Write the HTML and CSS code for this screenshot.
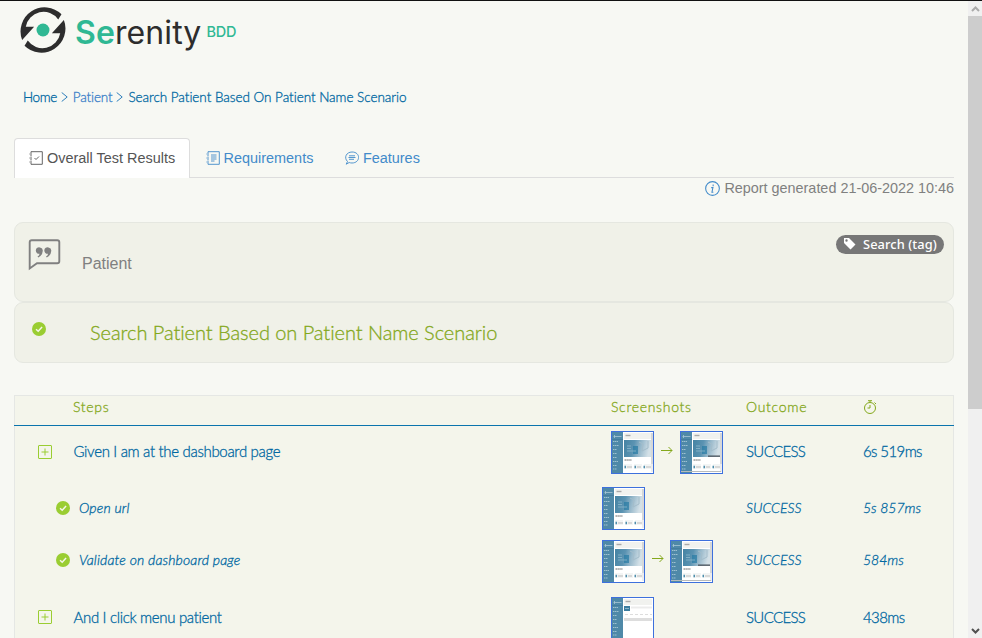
FILE: index.html
```
<!DOCTYPE html>
<html lang="en">
<head>
<meta charset="utf-8">
<title>Serenity Reports</title>
<link rel="stylesheet" href="styles.css">
</head>
<body>
<svg class="defs" aria-hidden="true">
  <defs>
    <linearGradient id="hero" x1="0" y1="0" x2="1" y2="0.15">
      <stop offset="0" stop-color="#4583a3"/><stop offset=".4" stop-color="#5b93b2"/><stop offset=".65" stop-color="#95b7ca"/><stop offset="1" stop-color="#d3e0e7"/>
    </linearGradient>
  </defs>
  <symbol id="check" viewBox="0 0 16 16"><circle cx="8" cy="8" r="8" fill="#9acd32"/><path d="M4.600 8.200l2.500 2.400 4.400-4.900" fill="none" stroke="#f4f5e9" stroke-width="1.700"/></symbol>
  <symbol id="plus" viewBox="0 0 14 14"><rect x=".5" y=".5" width="13" height="13" rx=".5"/><path d="M3.500 7h7M7 3.500v7"/></symbol>
  <symbol id="arrow" viewBox="0 0 12 10"><path d="M0 5.500h11M7.500 2l3.500 3.500L7.500 9"/></symbol>
  <symbol id="thumb-side" viewBox="0 0 41 41">
    <rect width="41" height="41" fill="#fff"/><rect width="11" height="41" fill="#4f89a8"/>
    <path d="M1.500 4.500h8M2.500 3v3" stroke="#a9c7d6" stroke-width=".8"/>
    <path d="M0 7.500h11" stroke="#40799a" stroke-width=".7"/>
    <path d="M1 9.500h5M1 13.500h5.500M1 17.500h4M1 21.500h4M1 25.500h4M1 29.500h5M1 33.500h4M1 37h4" stroke="#9fc0d0" stroke-width="1" stroke-dasharray="1.500 .5"/>
    <rect x="12" y="1" width="28" height="6" fill="#f1f2ef"/><path d="M13.500 3.500h5" stroke="#aaa" stroke-width="1.400"/>
  </symbol>
  <symbol id="thumb-dash" viewBox="0 0 41 41">
    <use href="#thumb-side"/>
    <rect x="12" y="8" width="27" height="17" fill="url(#hero)"/>
    <path d="M21 14h5v8h-5z" fill="#277ba4" opacity=".7"/><path d="M15 14h4M15 16.500h4M15 19h9" stroke="#8db7cc" stroke-width=".8"/>
    <path d="M27 10l4 2-1 7 6-3V9" fill="none" stroke="#a4bdcb" stroke-width="1"/>
    <path d="M12.500 28h7" stroke="#666" stroke-width="1" stroke-dasharray="1.500 .4"/>
    <path d="M12 32h8v5h-8zM22 32h8v5h-8zM32 32h8v5h-8z" fill="#f3f5f5"/>
    <path d="M12.500 35h1.500M22.500 35h1.500M31.500 35h1.500" stroke="#4d8dac" stroke-width="2.500"/>
    <path d="M15 35h5M25 35h4M34 35h5" stroke="#bbb" stroke-width="1"/>
    <path d="M40 1v39" stroke="#e7e7e7" stroke-width="1.400"/><path d="M40 1v31" stroke="#bfc2c2" stroke-width="1"/>
  </symbol>
  <symbol id="thumb-scroll" viewBox="0 0 41 41">
    <use href="#thumb-dash"/><path d="M27 23.500h12v1.300h-12z" fill="#47505a"/><path d="M0 39.500h40" stroke="#b8bbbc" stroke-width="1.200"/>
  </symbol>
  <symbol id="thumb-list" viewBox="0 0 41 41">
    <use href="#thumb-side"/><rect x="12" y="8" width="6" height="5" fill="#3c7d9f"/><path d="M13 10.500h4" stroke="#8db5ca" stroke-width="1"/>
    <path d="M19 9.500h21" stroke="#ececec" stroke-width="2"/><path d="M13 16.500h27" stroke="#ddd" stroke-width="1" stroke-dasharray="3 2"/><path d="M12 21.500h28" stroke="#ddd" stroke-width="3"/>
  </symbol>
</svg>

<div class="window">
  <main class="page">
    <header class="brand">
      <svg class="brand-mark" viewBox="1 1 46 46">
        <g id="blade"><path d="M4 33.500A23 23 0 0 1 41.700 9L38.600 14A17.200 17.200 0 0 0 7.500 21H15.500z"/></g>
        <use href="#blade" transform="rotate(180 24 24)"/>
        <circle cx="24" cy="24" r="6.200" class="brand-dot"/>
      </svg>
      <div class="brand-name"><b>Se</b>renity</div><span class="brand-suffix">BDD</span>
    </header>

    <nav class="crumbs">
      <a class="crumb-home">Home</a><svg class="chevron" viewBox="0 0 7 10"><path d="M.7 .5l5.500 4.500-5.500 4.500"/></svg>
      <a class="crumb-parent">Patient</a><svg class="chevron" viewBox="0 0 7 10"><path d="M.7 .5l5.500 4.500-5.500 4.500"/></svg>
      <a class="crumb-current">Search Patient Based On Patient Name Scenario</a>
    </nav>

    <ul class="tabs">
      <li class="tab active"><svg class="tab-icon" viewBox="0 0 14 14"><path d="M2 2V.7h11.300v12.600H2V12M2 4v1.500M2 8v1.500M.5 3h2.500M.5 7h2.500M.5 11h2.500M5.500 7l1.500 1.500 3-3"/></svg><span>Overall Test Results</span></li>
      <li class="tab"><svg class="tab-icon" viewBox="0 0 14 14"><path d="M2 2V.7h11.300v12.600H2V12M2 4v1.500M2 8v1.500M.5 3h2.500M.5 7h2.500M.5 11h2.500M5 4h5.500M5 6h5.500M5 8h5.500M5 10h3.500"/></svg><span>Requirements</span></li>
      <li class="tab"><svg class="tab-icon" viewBox="0 0 14 14"><path d="M2.500 10.500C-1.500 6.500 1.500 1 7 1c9 0 8.500 11 0 11-1.200 0-2-.2-2.800-.5L1.200 13.200zM4 4.800h6M3.500 6.500h7M4 8.300h5"/></svg><span>Features</span></li>
    </ul>
    <div class="generated"><svg class="info-icon" viewBox="0 0 14 14"><circle cx="7" cy="7" r="6.400"/><path d="M7.600 3.300v1.500M5.800 6.200h1.600l-.9 4.300h1.300"/></svg><span>Report generated 21-06-2022 10:46</span></div>

    <section class="card story">
      <svg class="quote-icon" viewBox="0 0 32 32"><path class="bubble" d="M1.200 29.500V3.200q0-2 2-2h25.600q2 0 2 2v19q0 2-2 2H8.500z"/><path class="quotes" d="M11.500 8.500a3.200 3.200 0 1 0-.5 6.200q0 1.800-2 2.700l.8 1q4.200-2 4.500-6.700.1-2.600-2.800-3.200zM20 8.500a3.200 3.200 0 1 0-.5 6.200q0 1.800-2 2.700l.8 1q4.200-2 4.500-6.700.1-2.600-2.800-3.200z"/></svg>
      <span class="story-name">Patient</span>
      <span class="tag"><svg class="tag-icon" viewBox="0 0 13 13"><path fill-rule="evenodd" d="M1 1h5l6.500 6.500-5 5L1 6zM3.500 2.300a1.200 1.200 0 1 0 0 2.400 1.200 1.200 0 0 0 0-2.400z"/></svg><span>Search (tag)</span></span>
    </section>
    <section class="card scenario">
      <svg class="check"><use href="#check"/></svg>
      <h1>Search Patient Based on Patient Name Scenario</h1>
    </section>

    <section class="steps">
      <div class="row head"><span class="col-step">Steps</span><span class="col-shots">Screenshots</span><span class="col-outcome">Outcome</span><span class="col-time"><svg class="clock" viewBox="0 0 14 14"><circle cx="7" cy="8" r="5.500"/><path d="M5 .7h4M7 1v1.500M11.500 2.500l1.500 1.500M7 5v3H4.500"/></svg></span></div>
      <div class="row step first">
        <span class="col-step"><svg class="plus"><use href="#plus"/></svg><a>Given I am at the dashboard page</a></span>
        <span class="col-shots"><svg class="thumb"><use href="#thumb-dash"/></svg><svg class="arrow"><use href="#arrow"/></svg><svg class="thumb"><use href="#thumb-scroll"/></svg></span>
        <span class="col-outcome">SUCCESS</span><span class="col-time">6s 519ms</span>
      </div>
      <div class="row sub open">
        <span class="col-step"><svg class="check"><use href="#check"/></svg><em>Open url</em></span>
        <span class="col-shots"><svg class="thumb"><use href="#thumb-dash"/></svg></span>
        <em class="col-outcome">SUCCESS</em><em class="col-time">5s 857ms</em>
      </div>
      <div class="row sub validate">
        <span class="col-step"><svg class="check"><use href="#check"/></svg><em>Validate on dashboard page</em></span>
        <span class="col-shots"><svg class="thumb"><use href="#thumb-dash"/></svg><svg class="arrow"><use href="#arrow"/></svg><svg class="thumb"><use href="#thumb-scroll"/></svg></span>
        <em class="col-outcome">SUCCESS</em><em class="col-time">584ms</em>
      </div>
      <div class="row step second">
        <span class="col-step"><svg class="plus"><use href="#plus"/></svg><a>And I click menu patient</a></span>
        <span class="col-shots"><svg class="thumb"><use href="#thumb-list"/></svg></span>
        <span class="col-outcome">SUCCESS</span><span class="col-time">438ms</span>
      </div>
    </section>
  </main>
  <aside class="scrollbar"><svg viewBox="0 0 14 15"><path class="up" d="M4 10l3.500-3.500L11 10"/></svg><div class="scroll-thumb"></div><svg class="down-box" viewBox="0 0 14 15"><path class="down" d="M4 6l3.500 3.500L11 6"/></svg></aside>
</div>
</body>
</html>
```

FILE: styles.css
```
* { box-sizing: border-box; }
body { margin: 0; background: #f7f8f3; font-family: Lato, sans-serif; font-weight: 300; font-variant-ligatures: none; color: #0068a2; overflow: hidden; }
svg { display: block; flex: none; }
.defs { position: absolute; width: 0; height: 0; }
.window { display: flex; width: 982px; height: 638px; border-top: 1px solid #111; overflow: hidden; }
.page { flex: 1; padding: 0 14px; height: 900px; white-space: nowrap; }

.brand { display: flex; height: 81px; padding: 5px 0 0 5px; }
.brand-mark { width: 48px; height: 48px; fill: #2d2d2d; }
.brand-dot { fill: #2fb893; }
.brand-name { margin-left: 8px; font: 32px/48px Inter, sans-serif; letter-spacing: .1px; color: #2d2d2d; padding-top: 3px; }
.brand-name b { font-weight: 600; color: #2fb893; }
.brand-suffix { margin: 15px 0 0 5px; font: 500 14.500px/22px Inter, sans-serif; letter-spacing: -.2px; color: #2fb893; }

.crumbs { display: flex; align-items: center; height: 30px; padding-left: 9px; font-size: 13.500px; letter-spacing: -.03px; -webkit-text-stroke: .3px currentColor; }
.crumb-home { letter-spacing: -.4px; }
.crumb-parent { color: #3a7fc8; letter-spacing: -.15px; }
.chevron { width: 7px; height: 10px; margin: 0 5px 0 4px; fill: none; stroke: #2f7fbb; }

.tabs { display: flex; margin: 26px 0 0; padding: 0; list-style: none; height: 40px; border-bottom: 1px solid #ddd; font: 14.450px "Liberation Sans", sans-serif; color: #428bca; }
.tab { display: flex; align-items: center; height: 40px; padding: 0 15px 1px; border: 1px solid transparent; border-bottom: 0; }
.tab.active { background: #fff; border-color: #ddd; border-radius: 4px 4px 0 0; color: #555; width: 176px; padding-left: 14px; }
.tab:not(.active) { padding-left: 14.500px; }
.tab-icon { width: 14px; height: 14px; margin-right: 4px; fill: none; stroke: currentColor; stroke-width: .9; }
.generated { display: flex; justify-content: flex-end; align-items: center; height: 20px; gap: 4px; color: #808080; font: 14.400px "Liberation Sans", sans-serif; }
.info-icon { width: 15px; height: 15px; fill: none; stroke: #428bca; }

.card { display: flex; background: #f0f1e8; border: 1px solid #e5e7e0; border-radius: 9px; }
.story { height: 80px; margin-top: 24px; padding: 16px 9px 0 12.500px; color: #808080; }
.quote-icon { width: 33px; height: 32px; }
.bubble { fill: none; stroke: #808080; stroke-width: 1.900; }
.quotes { fill: #808080; }
.story-name { margin: 14px auto 0 21.500px; font: 16px/21px "Liberation Sans", sans-serif; }
.tag { display: flex; align-items: center; height: 19px; width: 108px; margin-top: -4px; padding: 0 7px 2px; border-radius: 10px; background: #777; color: #fff; font: 500 12.800px "Noto Sans", sans-serif; letter-spacing: .1px; }
.tag-icon { width: 13px; height: 13px; margin-right: 7px; fill: #fff; }
.check { width: 14px; height: 14px; }
.scenario { height: 61px; padding: 19px 0 0 16.500px; }
.scenario h1 { margin: -2px 0 0 44.500px; font: 300 20px/24px Lato, sans-serif; letter-spacing: -.05px; color: #84a81c; -webkit-text-stroke: .3px currentColor; }

.steps { margin-top: 32px; height: 300px; border: 1px solid #e5e7e4; background: #f4f5eb; font-size: 15px; -webkit-text-stroke: .3px currentColor; }
.row { display: grid; grid-template-columns: 596px 136px 117px 1fr; margin: 0 -1px; align-items: center; }
.col-step, .col-shots { display: flex; align-items: center; }
.head { height: 30px; border-bottom: 1px solid #0a74ad; padding-bottom: 8px; color: #84a81c; font-size: 14px; letter-spacing: .7px; }
.head .col-step { padding-left: 59px; }
.step { height: 53px; letter-spacing: -.32px; }
.step .col-outcome { letter-spacing: -.65px; }
.step .col-time { letter-spacing: -.6px; }
.step a, .step .col-outcome, .step .col-time, .sub em { padding-bottom: 3px; }
.plus { width: 14px; height: 14px; margin: -2px 21.500px 0 24px; fill: none; stroke: #9acd32; }
.col-shots { padding-left: 1px; }
.thumb { width: 43px; height: 43px; border: 1px solid #3d70dd; }
.arrow { width: 12px; height: 10px; margin: -6px 7px 0; fill: none; stroke: #84a81c; }
.sub { height: 45px; font-size: 14px; }
.sub .col-step { padding-left: 42px; letter-spacing: .15px; }
.sub .check { margin: -2px 9px 0 0; }
.sub .col-shots { margin-left: -9px; }
.sub .col-shots .arrow { margin-right: 6px; }
.open { height: 59px; }
.validate { height: 46px; }
.second { height: 68px; }
.clock { width: 14px; height: 14px; fill: none; stroke: #84a81c; }

.scrollbar { width: 14px; height: 637px; background: #f0f0f0; display: flex; flex-direction: column; }
.scrollbar svg { width: 14px; height: 15px; }
.scroll-thumb { height: 393px; background: #cdcdcd; }
.scrollbar path { fill: none; stroke: #aaa; stroke-width: 2; }
.scrollbar .down-box { margin-top: auto; }
.scrollbar .down { stroke: #505050; }
```
